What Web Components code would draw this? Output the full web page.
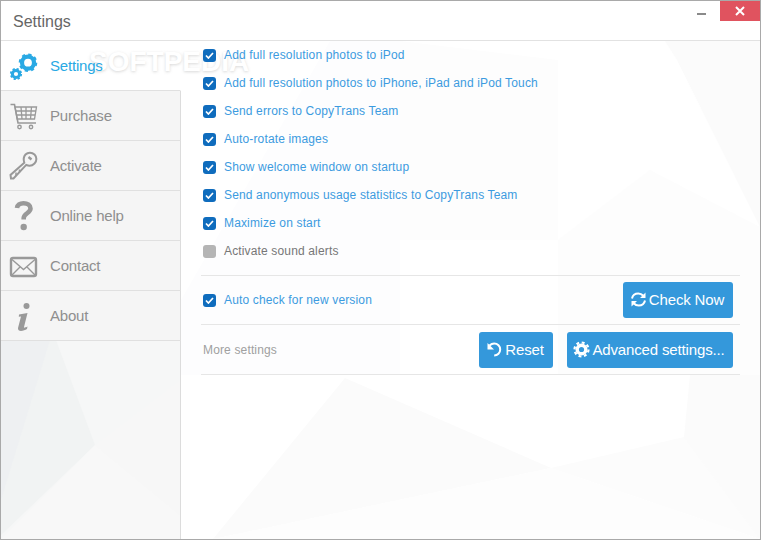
<!DOCTYPE html>
<html>
<head>
<title>Settings</title>
<style>
    html, body { margin: 0; height: 100%; background: #fff; }
    body { font-family: "Liberation Sans", Arial, sans-serif; overflow: hidden; }
</style>
</head>
<body>
<template id="window-template">
    <style>
        :host {
            display: grid;
            grid-template-rows: 40px 1fr;
            position: relative;
            box-sizing: border-box;
            width: 761px;
            height: 540px;
            overflow: hidden;
            background: #fff;
            border: 1px solid #a9a9a9;
        }
        .back { position: absolute; left: 0; top: 40px; width: 761px; height: 500px; }
        /* sits under the content so the labels stay readable */
        .mark {
            position: absolute; left: 88px; top: 45px;
            font: bold 28px "Liberation Sans", sans-serif;
            color: #fff;
            text-shadow: 0 1px 3px rgba(200, 200, 200, .7);
            pointer-events: none;
        }
        header {
            position: relative;
            display: flex;
            align-items: center;
            justify-content: space-between;
            padding-left: 12px;
            font-size: 16px;
            color: #666;
            border-bottom: 1px solid #e2e2e2;
        }
        header span { position: relative; top: 1px; }
        .controls { display: flex; align-self: flex-start; margin-top: -1px; }
        .min { width: 40px; height: 21px; display: flex; align-items: flex-start; justify-content: center; }
        .min i { display: block; width: 9px; height: 2px; margin-top: 13px; background: #8a8a8a; margin-left: 2px; }
        .close { width: 40px; height: 21px; background: #e0535f; display: flex; align-items: center; justify-content: center; }
        .body { position: relative; display: grid; grid-template-columns: 180px 1fr; }
        nav { display: flex; flex-direction: column; }
        nav .rest { flex: 1; border-right: 1px solid #dcdcdc; }
        main { padding: 0 20px 0 20px; }
    </style>
    <!-- faint low-poly backdrop, coordinates are page pixels -->
    <svg class="back" viewBox="1 41 761 500">
        <rect x="1" y="340" width="179" height="200" fill="#f6f7f7"/>
        <polygon points="1,340 56,340 95,445 1,535" fill="#f1f3f3"/>
        <polygon points="1,340 50,340 1,500" fill="#eef0f2"/>
        <polygon points="95,445 180,380 180,535" fill="#f7f7f7"/>
        <polygon points="1,539 95,445 180,515 180,539" fill="#f8f8f8"/>
        <polygon points="345,378 551,468 213,539" fill="#fbfbfb"/>
        <polygon points="551,468 684,437 760,375 760,539" fill="#fcfcfc"/>
        <polygon points="684,437 690,375 760,375 760,539" fill="#fbfbfb"/>
        <polygon points="213,539 551,468 760,539" fill="#fdfdfd"/>
        <polygon points="677,60 665,41 760,41 760,227" fill="#fbfbfb"/>
        <polygon points="400,41 558,60 558,240 400,240" fill="#fdfdfd"/>
        <polygon points="558,240 650,170 760,227 760,375 558,375" fill="#fdfdfd"/>
        <polygon points="181,300 330,41 400,41 400,375 181,375" fill="#fdfdfe"/>
    </svg>
    <div class="mark">SOFTPEDIA</div>
    <header>
        <span><slot name="title"></slot></span>
        <div class="controls">
            <div class="min"><i></i></div>
            <div class="close">
                <svg width="10" height="10" viewBox="0 0 10 10"><path d="M1 1 9 9M9 1 1 9" stroke="#fff" stroke-width="2" fill="none"/></svg>
            </div>
        </div>
    </header>
    <div class="body">
        <nav><slot name="nav"></slot><div class="rest"></div></nav>
        <main><slot></slot></main>
    </div>
</template>

<template id="nav-template">
    <style>
        :host {
            display: flex;
            align-items: center;
            box-sizing: border-box;
            height: 50px;
            width: 180px;
            background: #f5f5f5;
            border-right: 1px solid #dcdcdc;
            border-bottom: 1px solid #e0e0e0;
            font-size: 15px;
            letter-spacing: -0.2px;
            color: #8f8f8f;
        }
        :host([active]) {
            background: transparent;
            border-right-color: transparent;
            color: #29a9e4;
        }
        .icon { width: 49px; height: 49px; flex: none; display: flex; }
    </style>
    <span class="icon"><slot name="icon"></slot></span>
    <slot></slot>
</template>

<template id="check-template">
    <style>
        :host {
            display: flex;
            align-items: center;
            gap: 8px;
            height: 28px;
            padding-left: 2px;
            font-size: 12px;
            letter-spacing: 0.15px;
            color: #3c9be0;
        }
        :host([off]) { color: #777; }
        .box {
            width: 13px; height: 13px; flex: none;
            border-radius: 3px;
            background: #0f6cbd;
            display: flex; align-items: center; justify-content: center;
        }
        :host([off]) .box { background: #b5b5b5; }
        :host([off]) svg { display: none; }
    </style>
    <span class="box"><svg width="9" height="7" viewBox="0 0 9 7"><path d="M1 3.5 3.4 6 8 1" stroke="#fff" stroke-width="1.7" fill="none"/></svg></span>
    <slot></slot>
</template>

<template id="button-template">
    <style>
        :host {
            display: inline-flex;
            align-items: center;
            justify-content: center;
            gap: 2px;
            box-sizing: border-box;
            height: 36px;
            padding: 0 2px 1px 0;
            border-radius: 3px;
            background: #3498db;
            color: #fff;
            font-size: 15px;
            letter-spacing: -0.15px;
        }
    </style>
    <slot name="icon"></slot>
    <slot></slot>
</template>

<template id="row-template">
    <style>
        :host {
            display: flex;
            align-items: center;
            box-sizing: border-box;
            border-bottom: 1px solid #e6e6e6;
            padding-right: 7px;
        }
        .grow { flex: 1; }
    </style>
    <slot></slot>
    <div class="grow"></div>
    <slot name="right"></slot>
</template>

<settings-window>
    <span slot="title">Settings</span>

    <nav-item slot="nav" active>
        <svg slot="icon" width="49" height="49" viewBox="0 0 49 49">
            <g fill="none" stroke="#29a9e4">
                <circle cx="27" cy="21.700" r="6" stroke-width="4.200"/>
                <circle cx="27" cy="21.700" r="8.200" stroke-width="2.200" stroke-dasharray="3.200 3.240"/>
                <circle cx="15" cy="33" r="3.600" stroke-width="3"/>
                <circle cx="15" cy="33" r="5.200" stroke-width="1.800" stroke-dasharray="2.200 1.880"/>
            </g>
        </svg>
        Settings
    </nav-item>
    <nav-item slot="nav">
        <svg slot="icon" width="49" height="49" viewBox="0 0 49 49">
            <g fill="none" stroke="#999">
                <path d="M9.500 13.500h4l3.500 18.500h18" stroke-width="1.600"/>
                <path d="M14 16h21.500l-2 12H16.200zM20 16l1 12M25 16v12M30.500 16l-1 12M15 20h20M15.700 24h19" stroke-width="1.300"/>
                <circle cx="18.500" cy="36" r="1.700" stroke-width="1.400"/>
                <circle cx="30" cy="36" r="1.700" stroke-width="1.400"/>
            </g>
        </svg>
        Purchase
    </nav-item>
    <nav-item slot="nav">
        <svg slot="icon" width="49" height="49" viewBox="0 0 49 49">
            <g fill="none" stroke="#999" stroke-width="2">
                <path d="M24.500 13.500c2.500-2.500 6.500-2.300 9 0 2.500 2.500 2.500 6.500 0 9-2.300 2.300-5.500 2.800-8.300 1.400L12.500 37.500H10L9.500 34l13.800-12.300c-1-3-.8-5.900 1.200-8.200z"/>
                <path d="M15 35v-3.500M18.500 31.500v-3" stroke-width="1.500"/>
                <path d="M27.500 16l3 2.500" stroke-width="2.400"/>
            </g>
        </svg>
        Activate
    </nav-item>
    <nav-item slot="nav">
        <svg slot="icon" width="49" height="49" viewBox="0 0 49 49">
            <path d="M16 17c.3-3 3-4.800 6.500-4.800 4 0 7 2 7 5.300 0 4.500-6.800 5-6.800 9.500v1.500" fill="none" stroke="#999" stroke-width="4.600"/>
            <circle cx="22.700" cy="36" r="3.200" fill="#999"/>
        </svg>
        Online help
    </nav-item>
    <nav-item slot="nav">
        <svg slot="icon" width="49" height="49" viewBox="0 0 49 49">
            <rect x="10" y="17" width="25" height="18" rx="2" fill="none" stroke="#999" stroke-width="2.400"/>
            <path d="M11 18.500l11.500 10L34 18.500M11 34l8-8M34 34l-8-8" fill="none" stroke="#999" stroke-width="1.400"/>
        </svg>
        Contact
    </nav-item>
    <nav-item slot="nav">
        <svg slot="icon" width="49" height="49" viewBox="0 0 49 49">
            <g transform="translate(0,1)" fill="#999">
                <circle cx="25.500" cy="14" r="3"/>
                <path d="M18 22.500l8.500-1.500-3.500 14c0 1 1 1 3.500-.5l-.5 2.500c-3 2-9.500 3.500-9-1l3-11.500-2.200.2z"/>
            </g>
        </svg>
        About
    </nav-item>

    <check-row>Add full resolution photos to iPod</check-row>
    <check-row>Add full resolution photos to iPhone, iPad and iPod Touch</check-row>
    <check-row>Send errors to CopyTrans Team</check-row>
    <check-row>Auto-rotate images</check-row>
    <check-row>Show welcome window on startup</check-row>
    <check-row>Send anonymous usage statistics to CopyTrans Team</check-row>
    <check-row>Maximize on start</check-row>
    <check-row off>Activate sound alerts</check-row>

    <div style="height:10px;border-bottom:1px solid #e6e6e6"></div>

    <section-row style="height:49px">
        <check-row>Auto check for new version</check-row>
        <action-button slot="right" style="width:110px">
            <svg slot="icon" width="17" height="17" viewBox="0 0 17 17">
                <path d="M2 7.500C2.600 4.500 5 2.500 8.300 2.500c2 0 3.700.9 5 2.300M15 9.500c-.6 3-3 5-6.300 5-2 0-3.700-.9-5-2.300" fill="none" stroke="#fff" stroke-width="2"/>
                <path d="M15.500 1.500v5.500H10zM1.500 15.500V10H7z" fill="#fff"/>
            </svg>
            Check Now
        </action-button>
    </section-row>

    <section-row style="height:50px">
        <span style="font-size:12px;letter-spacing:.15px;color:#a0a0a0;padding-left:2px">More settings</span>
        <action-button slot="right" style="width:74px;margin-right:14px">
            <svg slot="icon" width="17" height="17" viewBox="0 0 17 17">
                <path d="M3.500 4.500c1.500-1.400 3-2 4.700-2 3.400 0 6 2.700 6 6s-2.600 6-6 6" fill="none" stroke="#fff" stroke-width="2"/>
                <path d="M1.500 2v6.500H8z" fill="#fff"/>
            </svg>
            Reset
        </action-button>
        <action-button slot="right" style="width:166px">
            <svg slot="icon" width="17" height="17" viewBox="0 0 17 17">
                <circle cx="8.500" cy="8.500" r="4.300" fill="none" stroke="#fff" stroke-width="3.400"/>
                <circle cx="8.500" cy="8.500" r="7" fill="none" stroke="#fff" stroke-width="2.200" stroke-dasharray="2.900 2.600"/>
            </svg>
            Advanced settings...
        </action-button>
    </section-row>
</settings-window>

<script>
    // every element just clones its template into an open shadow root
    function register(tag, templateId) {
        customElements.define(tag, class extends HTMLElement {
            constructor() {
                super();
                const content = document.getElementById(templateId).content;
                this.attachShadow({ mode: "open" }).appendChild(content.cloneNode(true));
            }
        });
    }

    register("settings-window", "window-template");
    register("nav-item", "nav-template");
    register("check-row", "check-template");
    register("action-button", "button-template");
    register("section-row", "row-template");
</script>
</body>
</html>
